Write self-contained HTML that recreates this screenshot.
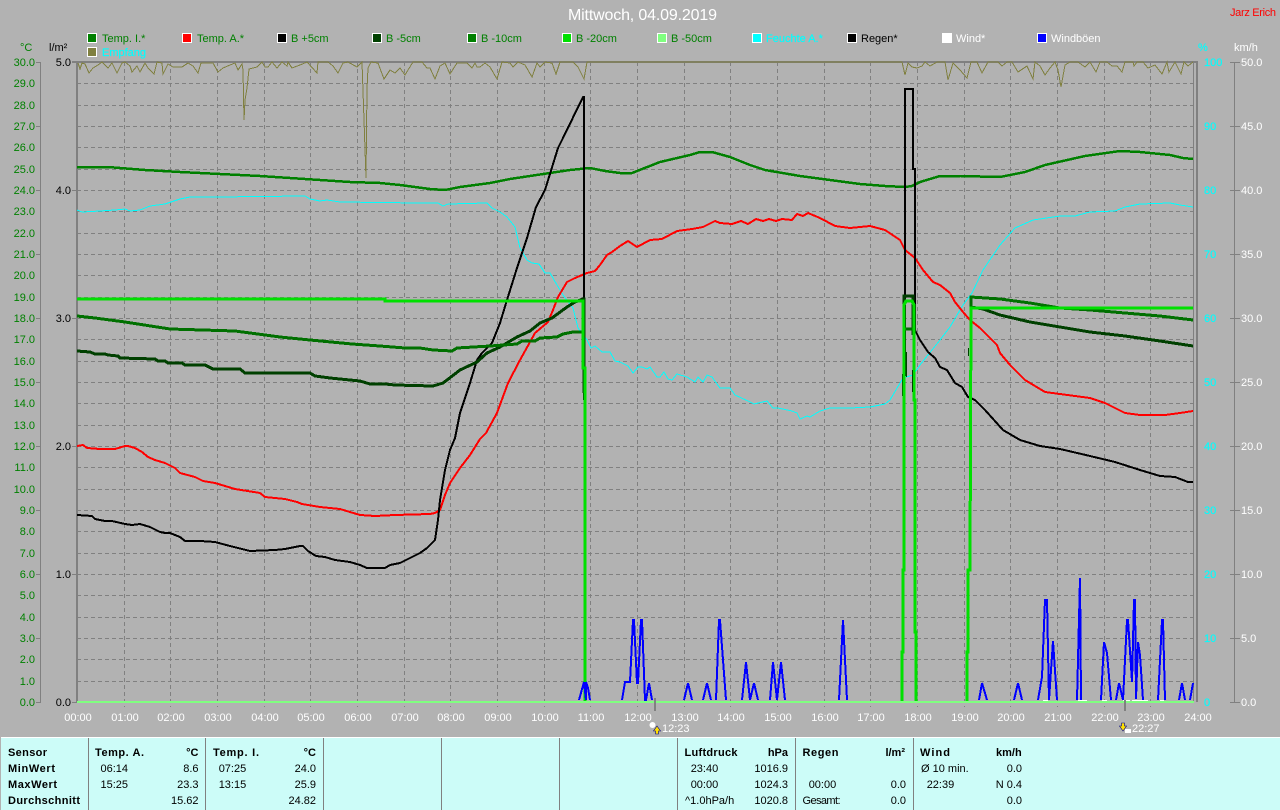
<!DOCTYPE html>
<html lang="de"><head><meta charset="utf-8"><title>Mittwoch, 04.09.2019</title>
<style>
html,body{margin:0;padding:0;background:#b2b2b2;width:1280px;height:810px;overflow:hidden}
svg{display:block;position:absolute;left:0;top:0}
text{font-family:"Liberation Sans",sans-serif;font-size:11px}
.g{fill:#008000}.k{fill:#000}.w{fill:#fff}.c{fill:#0ff;stroke:#0ff;stroke-width:.15}
.e{text-anchor:end}.m{text-anchor:middle}
.b{font-weight:bold}
polyline{fill:none;shape-rendering:crispEdges;stroke-linejoin:miter}
.grid line{stroke:#808080;stroke-width:1;stroke-dasharray:4 3;shape-rendering:crispEdges}
.solid line{stroke:#808080;stroke-width:1;shape-rendering:crispEdges}
.sq{stroke:#fff;stroke-width:1;shape-rendering:crispEdges}
</style></head><body>
<svg width="1280" height="810" viewBox="0 0 1280 810">
<rect width="1280" height="810" fill="#b2b2b2"/>
<text x="568" y="20" class="w" style="font-size:16px" textLength="149">Mittwoch, 04.09.2019</text>
<text x="1230" y="16" style="fill:#f00" textLength="46">Jarz Erich</text>

<!-- legend -->
<rect class="sq" x="87.5" y="33.5" width="9" height="9" fill="#008000"/><text x="102" y="42" class="g">Temp. I.*</text>
<rect class="sq" x="182.5" y="33.5" width="9" height="9" fill="#f00"/><text x="197" y="42" class="g">Temp. A.*</text>
<rect class="sq" x="277.5" y="33.5" width="9" height="9" fill="#000"/><text x="291" y="42" class="g">B +5cm</text>
<rect class="sq" x="372.5" y="33.5" width="9" height="9" fill="#004000"/><text x="386" y="42" class="g">B -5cm</text>
<rect class="sq" x="467.5" y="33.5" width="9" height="9" fill="#008000"/><text x="481" y="42" class="g">B -10cm</text>
<rect class="sq" x="562.5" y="33.5" width="9" height="9" fill="#00e000"/><text x="576" y="42" class="g">B -20cm</text>
<rect class="sq" x="657.5" y="33.5" width="9" height="9" fill="#80ff80"/><text x="671" y="42" class="g">B -50cm</text>
<rect class="sq" x="752.5" y="33.5" width="9" height="9" fill="#0ff"/><text x="766" y="42" class="c">Feuchte A.*</text>
<rect class="sq" x="847.5" y="33.5" width="9" height="9" fill="#000"/><text x="861" y="42" class="k">Regen*</text>
<rect class="sq" x="942.5" y="33.5" width="9" height="9" fill="#fff"/><text x="956" y="42" class="w">Wind*</text>
<rect class="sq" x="1037.5" y="33.5" width="9" height="9" fill="#00f"/><text x="1051" y="42" class="w">Windböen</text>
<rect class="sq" x="87.5" y="47.5" width="9" height="9" fill="#808040"/><text x="102" y="56" class="c">Empfang</text>

<!-- units -->
<text x="20" y="51" class="g">°C</text>
<text x="49" y="51" class="k">l/m²</text>
<text x="1198" y="51" class="c">%</text>
<text x="1234" y="51" class="w">km/h</text>

<!-- horizontal grid -->
<g class="grid">
<line x1="77" x2="1194" y1="83.5" y2="83.5"/><line x1="77" x2="1194" y1="105.5" y2="105.5"/><line x1="77" x2="1194" y1="126.5" y2="126.5"/><line x1="77" x2="1194" y1="147.5" y2="147.5"/><line x1="77" x2="1194" y1="169.5" y2="169.5"/><line x1="77" x2="1194" y1="190.5" y2="190.5"/><line x1="77" x2="1194" y1="211.5" y2="211.5"/><line x1="77" x2="1194" y1="233.5" y2="233.5"/><line x1="77" x2="1194" y1="254.5" y2="254.5"/><line x1="77" x2="1194" y1="275.5" y2="275.5"/><line x1="77" x2="1194" y1="297.5" y2="297.5"/><line x1="77" x2="1194" y1="318.5" y2="318.5"/><line x1="77" x2="1194" y1="339.5" y2="339.5"/><line x1="77" x2="1194" y1="361.5" y2="361.5"/><line x1="77" x2="1194" y1="382.5" y2="382.5"/><line x1="77" x2="1194" y1="403.5" y2="403.5"/><line x1="77" x2="1194" y1="425.5" y2="425.5"/><line x1="77" x2="1194" y1="446.5" y2="446.5"/><line x1="77" x2="1194" y1="467.5" y2="467.5"/><line x1="77" x2="1194" y1="489.5" y2="489.5"/><line x1="77" x2="1194" y1="510.5" y2="510.5"/><line x1="77" x2="1194" y1="531.5" y2="531.5"/><line x1="77" x2="1194" y1="553.5" y2="553.5"/><line x1="77" x2="1194" y1="574.5" y2="574.5"/><line x1="77" x2="1194" y1="595.5" y2="595.5"/><line x1="77" x2="1194" y1="617.5" y2="617.5"/><line x1="77" x2="1194" y1="638.5" y2="638.5"/><line x1="77" x2="1194" y1="659.5" y2="659.5"/><line x1="77" x2="1194" y1="681.5" y2="681.5"/>
<!-- vertical grid -->
<line y1="62" y2="707" x1="124.5" x2="124.5"/><line y1="62" y2="707" x1="170.5" x2="170.5"/><line y1="62" y2="707" x1="217.5" x2="217.5"/><line y1="62" y2="707" x1="264.5" x2="264.5"/><line y1="62" y2="707" x1="310.5" x2="310.5"/><line y1="62" y2="707" x1="357.5" x2="357.5"/><line y1="62" y2="707" x1="404.5" x2="404.5"/><line y1="62" y2="707" x1="450.5" x2="450.5"/><line y1="62" y2="707" x1="497.5" x2="497.5"/><line y1="62" y2="707" x1="544.5" x2="544.5"/><line y1="62" y2="707" x1="590.5" x2="590.5"/><line y1="62" y2="707" x1="637.5" x2="637.5"/><line y1="62" y2="707" x1="684.5" x2="684.5"/><line y1="62" y2="707" x1="730.5" x2="730.5"/><line y1="62" y2="707" x1="777.5" x2="777.5"/><line y1="62" y2="707" x1="824.5" x2="824.5"/><line y1="62" y2="707" x1="870.5" x2="870.5"/><line y1="62" y2="707" x1="917.5" x2="917.5"/><line y1="62" y2="707" x1="964.5" x2="964.5"/><line y1="62" y2="707" x1="1010.5" x2="1010.5"/><line y1="62" y2="707" x1="1057.5" x2="1057.5"/><line y1="62" y2="707" x1="1104.5" x2="1104.5"/><line y1="62" y2="707" x1="1150.5" x2="1150.5"/>
</g>

<!-- axes -->
<g class="solid">
<line x1="40.5" x2="40.5" y1="62" y2="702"/>
<line x1="36" x2="41" y1="62.5" y2="62.5"/><line x1="36" x2="41" y1="126.5" y2="126.5"/><line x1="36" x2="41" y1="190.5" y2="190.5"/><line x1="36" x2="41" y1="254.5" y2="254.5"/><line x1="36" x2="41" y1="318.5" y2="318.5"/><line x1="36" x2="41" y1="382.5" y2="382.5"/><line x1="36" x2="41" y1="446.5" y2="446.5"/><line x1="36" x2="41" y1="510.5" y2="510.5"/><line x1="36" x2="41" y1="574.5" y2="574.5"/><line x1="36" x2="41" y1="638.5" y2="638.5"/><line x1="36" x2="41" y1="702.5" y2="702.5"/>
<line x1="72" x2="77" y1="190.5" y2="190.5"/><line x1="72" x2="77" y1="318.5" y2="318.5"/><line x1="72" x2="77" y1="446.5" y2="446.5"/><line x1="72" x2="77" y1="574.5" y2="574.5"/><line x1="72" x2="77" y1="702.5" y2="702.5"/>
<line x1="1193.5" x2="1193.5" y1="62" y2="702"/>
<line x1="1234.5" x2="1234.5" y1="62" y2="702"/>
<line x1="1230" x2="1240" y1="62.5" y2="62.5"/><line x1="1230" x2="1240" y1="126.5" y2="126.5"/><line x1="1230" x2="1240" y1="190.5" y2="190.5"/><line x1="1230" x2="1240" y1="254.5" y2="254.5"/><line x1="1230" x2="1240" y1="318.5" y2="318.5"/><line x1="1230" x2="1240" y1="382.5" y2="382.5"/><line x1="1230" x2="1240" y1="446.5" y2="446.5"/><line x1="1230" x2="1240" y1="510.5" y2="510.5"/><line x1="1230" x2="1240" y1="574.5" y2="574.5"/><line x1="1230" x2="1240" y1="638.5" y2="638.5"/><line x1="1230" x2="1240" y1="702.5" y2="702.5"/>
</g>
<rect x="76" y="62" width="2" height="640" fill="#808080"/>
<rect x="72" y="61" width="1126" height="2" fill="#808080"/>
<rect x="1196" y="62" width="2" height="640" fill="#808080"/>

<!-- left scale -->
<g class="g" text-anchor="end">
<text x="35" y="66">30.0</text><text x="35" y="87">29.0</text><text x="35" y="109">28.0</text><text x="35" y="130">27.0</text><text x="35" y="151">26.0</text><text x="35" y="173">25.0</text><text x="35" y="194">24.0</text><text x="35" y="215">23.0</text><text x="35" y="237">22.0</text><text x="35" y="258">21.0</text><text x="35" y="279">20.0</text><text x="35" y="301">19.0</text><text x="35" y="322">18.0</text><text x="35" y="343">17.0</text><text x="35" y="365">16.0</text><text x="35" y="386">15.0</text><text x="35" y="407">14.0</text><text x="35" y="429">13.0</text><text x="35" y="450">12.0</text><text x="35" y="471">11.0</text><text x="35" y="493">10.0</text><text x="35" y="514">9.0</text><text x="35" y="535">8.0</text><text x="35" y="557">7.0</text><text x="35" y="578">6.0</text><text x="35" y="599">5.0</text><text x="35" y="621">4.0</text><text x="35" y="642">3.0</text><text x="35" y="663">2.0</text><text x="35" y="685">1.0</text><text x="35" y="706">0.0</text>
</g>
<g class="k" text-anchor="end">
<text x="71" y="66">5.0</text><text x="71" y="194">4.0</text><text x="71" y="322">3.0</text><text x="71" y="450">2.0</text><text x="71" y="578">1.0</text><text x="71" y="706">0.0</text>
</g>
<!-- right scales -->
<g class="c">
<text x="1204" y="66">100</text><text x="1204" y="130">90</text><text x="1204" y="194">80</text><text x="1204" y="258">70</text><text x="1204" y="322">60</text><text x="1204" y="386">50</text><text x="1204" y="450">40</text><text x="1204" y="514">30</text><text x="1204" y="578">20</text><text x="1204" y="642">10</text><text x="1204" y="706">0</text>
</g>
<g class="w">
<text x="1241" y="66">50.0</text><text x="1241" y="130">45.0</text><text x="1241" y="194">40.0</text><text x="1241" y="258">35.0</text><text x="1241" y="322">30.0</text><text x="1241" y="386">25.0</text><text x="1241" y="450">20.0</text><text x="1241" y="514">15.0</text><text x="1241" y="578">10.0</text><text x="1241" y="642">5.0</text><text x="1241" y="706">0.0</text>
</g>
<!-- time labels -->
<g class="w" text-anchor="middle">
<text x="78" y="721">00:00</text><text x="125" y="721">01:00</text><text x="171" y="721">02:00</text><text x="218" y="721">03:00</text><text x="265" y="721">04:00</text><text x="311" y="721">05:00</text><text x="358" y="721">06:00</text><text x="405" y="721">07:00</text><text x="451" y="721">08:00</text><text x="498" y="721">09:00</text><text x="545" y="721">10:00</text><text x="591" y="721">11:00</text><text x="638" y="721">12:00</text><text x="685" y="721">13:00</text><text x="731" y="721">14:00</text><text x="778" y="721">15:00</text><text x="825" y="721">16:00</text><text x="871" y="721">17:00</text><text x="918" y="721">18:00</text><text x="965" y="721">19:00</text><text x="1011" y="721">20:00</text><text x="1058" y="721">21:00</text><text x="1105" y="721">22:00</text><text x="1151" y="721">23:00</text><text x="1198" y="721">24:00</text>
</g>

<!-- Empfang -->
<polyline stroke="#808040" stroke-width="1" points="78,63 80,69 82,63 85,64 89,73 93,68 98,65 102,62 108,68 112,63 117,73 122,63 125,62 130,66 132,72 137,66 140,72 145,63 148,68 154,74 157,62 162,63 163,74 168,64 173,67 182,67 188,63 193,66 198,73 201,63 208,63 213,63 218,72 223,68 230,65 235,63 238,70 242,64 243,70 244,120 245,100 247,88 249,69 257,67 262,62 265,67 268,67 272,62 277,68 282,62 287,66 288,62 292,68 300,65 307,62 317,73 318,62 328,62 333,66 338,73 343,63 348,62 357,67 362,62 364,120 366,178 367,88 368,68 371,62 378,63 384,79 390,70 395,73 400,68 405,75 408,70 413,62 422,62 427,68 430,68 435,79 440,66 445,63 450,74 457,63 467,63 472,68 475,63 477,67 480,67 485,63 490,67 497,79 502,62 510,63 513,67 518,62 525,65 532,77 537,63 540,67 545,62 552,63 556,74 560,62 573,62 578,67 584,79 587,62 902,62 905,75 908,63 912,67 917,68 922,66 925,62 930,66 937,62 945,62 948,80 953,63 960,70 967,78 971,62 977,62 982,73 988,62 998,62 1002,66 1007,62 1012,62 1018,72 1027,66 1033,79 1035,62 1040,66 1045,75 1050,68 1055,62 1058,70 1061,87 1065,65 1070,62 1078,62 1085,67 1090,62 1096,72 1100,62 1107,62 1112,66 1117,66 1122,72 1125,62 1133,62 1134,66 1137,62 1143,62 1148,68 1155,65 1162,74 1167,62 1169,72 1175,62 1181,74 1184,62 1188,66 1193,62"/>

<!-- Feuchte -->
<polyline stroke="#0ff" stroke-width="1" points="77,210 82,212 100,211 115,210 125,209 130,211 140,210 150,206 165,204 180,199 190,197 215,197 305,196 310,199 320,201 327,200 340,202 420,203 438,203 443,206 448,204 487,203 492,208 500,212 507,217 515,227 520,248 527,260 532,263 539,264 545,273 550,273 557,285 563,295 573,308 578,328 587,340 591,348 595,346 602,352 610,352 615,361 620,362 628,366 633,373 638,367 642,367 647,369 650,367 657,377 660,377 664,372 668,379 672,380 677,374 687,377 695,382 698,377 703,382 707,375 712,377 720,388 730,388 735,395 748,401 754,404 767,401 773,408 778,408 792,411 797,413 800,419 807,416 810,417 820,411 830,408 850,408 870,407 885,404 890,400 903,378 913,375 920,365 940,340 950,327 963,305 972,293 983,270 1000,245 1015,228 1033,220 1060,216 1075,216 1090,212 1115,211 1125,207 1140,204 1170,203 1180,205 1193,207"/>

<!-- Temp I -->
<polyline stroke="#008000" stroke-width="2.5" points="77,167 108,167 120,168 145,170 180,172 200,173 240,175 260,176 290,178 320,180 350,182 380,183 400,185 430,189 445,190 460,187 490,183 510,179 530,176 570,170 590,168 605,171 620,173 632,173 660,162 690,155 700,152 712,152 730,157 750,165 765,170 800,176 830,180 860,184 885,186 905,187 912,186 920,182 940,176 960,176 1000,177 1025,172 1045,165 1085,156 1120,151 1140,152 1170,155 1183,158 1193,159"/>

<!-- Temp A -->
<polyline stroke="#f00" stroke-width="2" points="77,446 83,445 87,448 100,449 105,449 115,449 125,446 128,446 135,448 142,452 148,457 155,460 165,463 175,468 180,473 195,477 203,481 215,483 235,489 260,493 265,497 285,499 297,502 302,504 320,507 340,509 360,515 375,516 395,515 430,514 435,513 440,510 445,495 450,483 460,468 470,455 480,439 486,433 497,413 508,383 520,360 535,333 548,322 553,310 558,297 567,282 575,278 587,273 595,271 600,265 607,255 612,252 620,246 628,241 637,247 650,240 662,239 677,231 692,229 703,227 715,221 720,223 732,224 741,221 748,224 756,219 763,221 769,219 776,221 782,219 792,220 797,214 803,216 808,213 820,218 835,226 850,228 870,226 885,230 900,240 905,250 915,258 923,270 933,282 940,285 950,293 955,302 963,312 970,320 980,328 987,335 997,345 1000,353 1010,365 1025,380 1045,392 1060,394 1090,398 1105,403 1125,413 1140,415 1165,415 1180,413 1193,411"/>

<!-- B +5 -->
<polyline stroke="#000" stroke-width="2" points="77,515 92,516 95,519 105,521 112,521 125,524 132,525 140,524 150,527 160,532 165,533 170,533 180,537 185,541 200,541 215,542 230,546 250,551 275,550 285,549 300,546 303,546 308,551 316,556 325,557 335,560 350,562 360,565 367,568 385,568 390,565 400,563 410,558 420,553 427,548 435,540 438,520 440,500 445,470 450,450 455,438 460,413 470,383 477,360 482,353 492,343 500,323 507,300 517,268 527,238 536,207 545,190 558,148 563,138 583,97 584,97 584,400"/>
<polyline stroke="#000" stroke-width="2" points="903,396 903,375 905,375 905,89 913,89 913,169 915,169 915,330 920,340 928,352 935,358 940,367 947,370 955,383 962,387 968,397 975,400 985,410 1003,430 1020,440 1040,446 1060,449 1090,456 1115,462 1140,470 1160,476 1175,477 1188,482 1193,482"/>

<!-- B -5 -->
<polyline stroke="#004000" stroke-width="3" points="77,351 90,352 95,354 105,354 108,355 118,356 120,358 155,359 158,361 165,361 168,363 182,363 185,365 205,365 213,369 240,369 245,373 310,373 315,376 330,378 360,381 370,384 385,384 395,385 433,386 443,383 447,380 460,370 477,362 487,353 500,347 517,337 530,331 540,323 552,318 567,307 575,302 583,299 584,299 584,393"/>
<polyline stroke="#004000" stroke-width="3" points="904,335 904,296 913,296 913,335"/>
<polyline stroke="#004000" stroke-width="3" points="971,307 983,309 1000,315 1030,322 1060,327 1090,332 1125,336 1160,341 1193,346"/>

<!-- B -10 -->
<polyline stroke="#007000" stroke-width="3" points="77,316 95,318 125,322 170,329 235,331 280,337 310,340 352,344 380,346 405,348 420,348 433,350 452,351 457,348 490,346 517,344 522,341 535,341 540,338 557,337 563,334 573,332 583,332"/>
<polyline stroke="#007000" stroke-width="3" points="905,329 914,329"/>
<polyline stroke="#007000" stroke-width="3" points="971,307 971,297 1000,299 1030,303 1060,308 1090,310 1125,313 1160,316 1193,320"/>

<!-- B -20 -->
<polyline stroke="#00e000" stroke-width="3" points="77,299 385,299 385,301 583,301 583,368 585,368 585,702"/>
<polyline stroke="#00e000" stroke-width="3" points="902,702 902,652 903,652 903,570 904,570 904,305 906,301 912,301 914,305 914,400 915,400 915,632 916,632 916,702"/>
<polyline stroke="#00e000" stroke-width="3" points="967,702 967,652 968,652 968,570 970,570 971,308 1193,308"/>
<g fill="#004000" shape-rendering="crispEdges">
<rect x="906" y="352" width="1" height="25"/><rect x="912" y="370" width="1" height="22"/><rect x="968" y="348" width="1" height="8"/>
</g>

<!-- wind gusts white -->
<g fill="#fff" shape-rendering="crispEdges">
<rect x="1043" y="700" width="5" height="1"/><rect x="1078" y="700" width="9" height="1"/><rect x="1102" y="700" width="5" height="1"/><rect x="1123" y="700" width="7" height="1"/><rect x="1132" y="700" width="16" height="1"/><rect x="1160" y="700" width="4" height="1"/>
</g>
<!-- Windböen -->
<polyline stroke="#00f" stroke-width="2" points="579,700 584,682 586,700 586,682 588,688 590,700"/>
<polyline stroke="#00f" stroke-width="2" points="622,700 625,682 630,682 633,620 634,620 637,683 638,683 641,620 642,620 645,700 646,700 649,683 652,700"/>
<polyline stroke="#00f" stroke-width="2" points="684,700 688,683 692,700"/>
<polyline stroke="#00f" stroke-width="2" points="703,700 707,683 711,700"/>
<polyline stroke="#00f" stroke-width="2" points="716,700 719,620 720,620 726,700"/>
<polyline stroke="#00f" stroke-width="2" points="742,700 746,662 750,700 754,683 758,700"/>
<polyline stroke="#00f" stroke-width="2" points="770,700 773,662 777,700 781,662 785,700"/>
<polyline stroke="#00f" stroke-width="2" points="839,700 843,620 847,700"/>
<polyline stroke="#00f" stroke-width="2" points="979,700 982,683 987,700"/>
<polyline stroke="#00f" stroke-width="2" points="1014,700 1018,683 1022,700"/>
<polyline stroke="#00f" stroke-width="2" points="1038,700 1042,677 1045,600 1047,600 1049,700 1053,641 1057,700"/>
<polyline stroke="#00f" stroke-width="2" points="1077,700 1080,578 1081,700"/>
<polyline stroke="#00f" stroke-width="2" points="1101,700 1104,642 1107,653 1111,700"/>
<polyline stroke="#00f" stroke-width="2" points="1116,700 1119,683 1123,700 1127,620 1128,620 1132,682 1134,600 1135,600 1136,699 1138,642 1140,655 1143,700"/>
<polyline stroke="#00f" stroke-width="2" points="1158,700 1162,620 1163,620 1165,700"/>
<polyline stroke="#00f" stroke-width="2" points="1179,700 1182,683 1185,700"/>
<polyline stroke="#00f" stroke-width="2" points="1190,700 1193,683"/>

<!-- B -50 baseline -->
<rect x="77" y="701" width="1117" height="2" fill="#80ff80"/>

<!-- sun events -->
<rect x="654" y="698" width="2" height="13" fill="#808080"/>
<rect x="1124" y="700" width="2" height="11" fill="#808080"/>
<circle cx="652.5" cy="725" r="3" fill="#fff"/>
<path d="M657 726l3.500 5h-2v3h-3v-3h-2z" fill="#ffe000" stroke="#000080" stroke-width=".6"/>
<text x="662" y="732" class="w">12:23</text>
<path d="M1121.500 723h3v3h2l-3.500 5-3.500-5h2z" fill="#ffe000" stroke="#000080" stroke-width=".6"/>
<rect x="1125" y="729" width="6" height="4" fill="#fff"/>
<text x="1132" y="732" class="w">22:27</text>

<!-- table -->
<rect x="0" y="737" width="1280" height="73" fill="#ccfcf8"/>
<rect x="0" y="737" width="1280" height="1" fill="#fff"/>
<rect x="0" y="737" width="1" height="73" fill="#b2b2b2"/>
<g fill="#808080" shape-rendering="crispEdges">
<rect x="88" y="738" width="1" height="72"/><rect x="205" y="738" width="1" height="72"/><rect x="323" y="738" width="1" height="72"/><rect x="441" y="738" width="1" height="72"/><rect x="559" y="738" width="1" height="72"/><rect x="677" y="738" width="1" height="72"/><rect x="795" y="738" width="1" height="72"/><rect x="913" y="738" width="1" height="72"/>
</g>
<g class="k">
<text x="8" y="756" class="b" textLength="39">Sensor</text>
<text x="8" y="772" class="b" textLength="47">MinWert</text>
<text x="8" y="788" class="b" textLength="49">MaxWert</text>
<text x="8" y="804" class="b" textLength="72">Durchschnitt</text>

<text x="95" y="756" class="b" textLength="49">Temp. A.</text>
<text x="198.500" y="756" class="b e">°C</text>
<text x="100.500" y="772">06:14</text><text x="198.500" y="772" class="e">8.6</text>
<text x="100.500" y="788">15:25</text><text x="198.500" y="788" class="e">23.3</text>
<text x="198.500" y="804" class="e">15.62</text>

<text x="213" y="756" class="b" textLength="46">Temp. I.</text>
<text x="316" y="756" class="b e">°C</text>
<text x="218.700" y="772">07:25</text><text x="316" y="772" class="e">24.0</text>
<text x="218.700" y="788">13:15</text><text x="316" y="788" class="e">25.9</text>
<text x="316" y="804" class="e">24.82</text>

<text x="684.500" y="756" class="b" textLength="53">Luftdruck</text>
<text x="788" y="756" class="b e">hPa</text>
<text x="690.700" y="772">23:40</text><text x="788" y="772" class="e">1016.9</text>
<text x="690.700" y="788">00:00</text><text x="788" y="788" class="e">1024.3</text>
<text x="685" y="804">^1.0hPa/h</text><text x="788" y="804" class="e">1020.8</text>

<text x="802.500" y="756" class="b" textLength="36">Regen</text>
<text x="905" y="756" class="b e">l/m²</text>
<text x="808.700" y="788">00:00</text><text x="906" y="788" class="e">0.0</text>
<text x="802.500" y="804" textLength="38">Gesamt:</text><text x="906" y="804" class="e">0.0</text>

<text x="920" y="756" class="b" textLength="30">Wind</text>
<text x="1021.700" y="756" class="b e">km/h</text>
<text x="921" y="772">Ø 10 min.</text><text x="1022" y="772" class="e">0.0</text>
<text x="926.700" y="788">22:39</text><text x="1022" y="788" class="e">N 0.4</text>
<text x="1022" y="804" class="e">0.0</text>
</g>
</svg>
</body></html>
